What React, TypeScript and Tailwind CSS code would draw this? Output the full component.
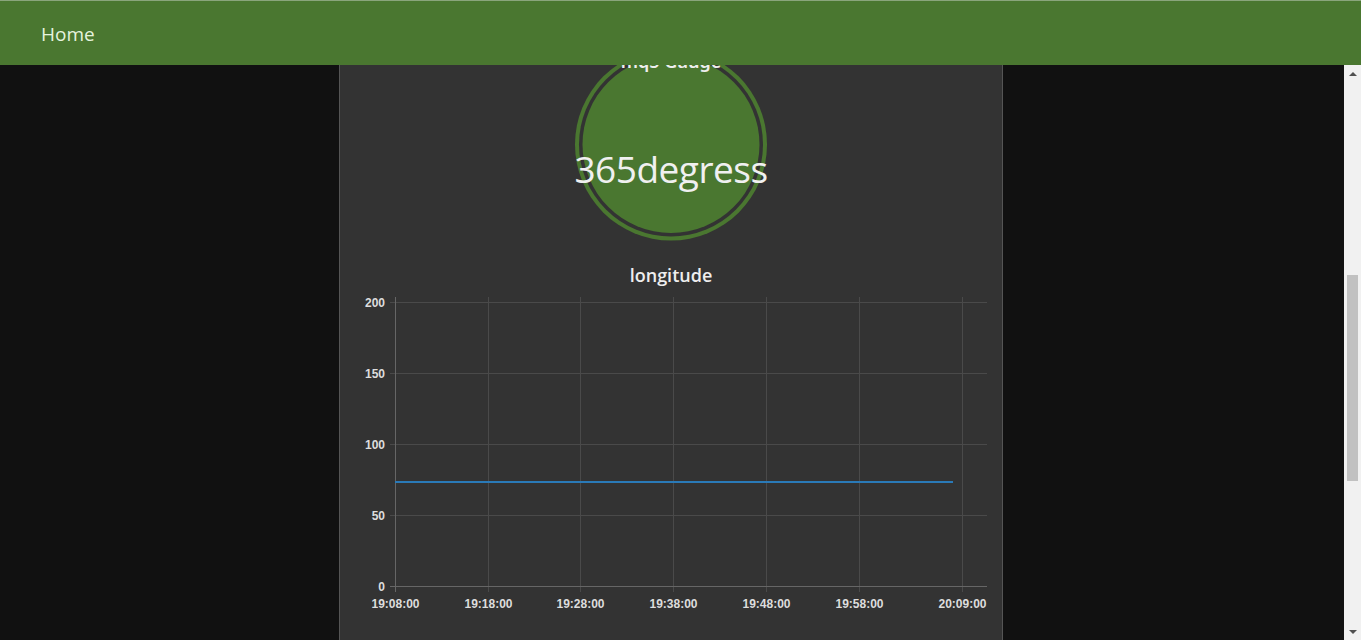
import React from "react";

const yTicks = [
  { v: "200", y: 12 },
  { v: "150", y: 83 },
  { v: "100", y: 154 },
  { v: "50", y: 225 },
  { v: "0", y: 296 },
];
const xTicks = [
  { t: "19:08:00", x: 55.5 },
  { t: "19:18:00", x: 148.5 },
  { t: "19:28:00", x: 240.5 },
  { t: "19:38:00", x: 333.5 },
  { t: "19:48:00", x: 426.5 },
  { t: "19:58:00", x: 519.5 },
  { t: "20:09:00", x: 622.5 },
];

function Chart() {
  return (
    <svg width="662" height="340" viewBox="0 0 662 340" className="block">
      {yTicks.map((t) => (
        <line key={t.v} x1="50" x2="647" y1={t.y + 0.5} y2={t.y + 0.5} stroke="#4a4a4a" strokeWidth="1" />
      ))}
      {xTicks.map((t) => (
        <line key={t.t} x1={t.x} x2={t.x} y1="7" y2="302" stroke="#4a4a4a" strokeWidth="1" />
      ))}
      <line x1="55.5" x2="55.5" y1="7" y2="302" stroke="#666" strokeWidth="1" />
      <line x1="50" x2="647" y1="296.5" y2="296.5" stroke="#666" strokeWidth="1" />
      <line x1="55" x2="613" y1="192" y2="192" stroke="#2a7ab8" strokeWidth="2" />
      {yTicks.map((t) => (
        <text
          key={"l" + t.v}
          x="45"
          y={t.y + 4.5}
          textAnchor="end"
          fontFamily="'Liberation Sans', Arial, sans-serif"
          fontWeight="bold"
          fontSize="12"
          fill="#dddddd"
        >
          {t.v}
        </text>
      ))}
      {xTicks.map((t) => (
        <text
          key={"x" + t.t}
          x={t.x}
          y="318"
          textAnchor="middle"
          fontFamily="'Liberation Sans', Arial, sans-serif"
          fontWeight="bold"
          fontSize="12"
          fill="#dddddd"
        >
          {t.t}
        </text>
      ))}
    </svg>
  );
}

export default function App() {
  return (
    <div className="relative h-[640px] w-[1361px] overflow-hidden bg-[#111111]" style={{ fontFamily: "'Noto Sans', 'Open Sans', sans-serif" }}>
      <header className="absolute left-0 right-0 top-0 z-10 flex h-[65px] items-center border-t border-[#8aa57c] bg-[#4a7730] pl-[41px] pt-[3px]">
        <span className="text-[19px] leading-none text-[#e6f3de]" style={{ fontFamily: "'Open Sans', 'Noto Sans', sans-serif" }}>Home</span>
      </header>

      <div className="flex h-full">
        <div className="flex-1">
          <div className="ml-[339px] h-[637px] w-[664px] border-x border-[#555] bg-[#333333]">
            <div className="relative mt-[48px] h-[193px]">
              <svg width="662" height="193" viewBox="0 0 662 193" className="block">
                <circle cx="331" cy="96.5" r="96" fill="#4a7730" />
                <circle cx="331" cy="96.5" r="92" fill="#333333" />
                <circle cx="331" cy="96.5" r="88.5" fill="#4a7730" />
              </svg>
              <div className="absolute left-0 right-0 top-[2px] text-center text-[18px] font-semibold leading-[22px] text-[#eeeeee]">mq5 Gauge</div>
              <div className="absolute left-0 right-0 top-[99px] text-center text-[37px] leading-[44px] tracking-[-0.5px] text-[#f0f0f0]" style={{ fontFamily: "'Open Sans', 'Noto Sans', sans-serif" }}>
                365degress
              </div>
            </div>
            <div className="mt-[23px] text-center text-[18px] font-semibold leading-[22px] text-[#eeeeee]" style={{ fontFamily: "'Open Sans', 'Noto Sans', sans-serif" }}>longitude</div>
            <div className="mt-[4px]">
              <Chart />
            </div>
          </div>
          <div className="flex h-[3px]">
            <div className="ml-[43px] w-[294px] bg-[#3a3a3a]" />
            <div className="ml-[49px] w-[297px] bg-[#14150f]" />
            <div className="w-[47px] bg-[#3c3d36]" />
          </div>
        </div>
        <div className="mt-[65px] flex w-[17px] flex-col items-center bg-[#f1f1f1]">
          <div className="flex h-[17px] w-full items-center justify-center">
            <div className="h-0 w-0 border-x-[4px] border-b-[4px] border-x-transparent border-b-[#505050]" />
          </div>
          <div className="mt-[193px] h-[206px] w-[11px] bg-[#c1c1c1]" />
          <div className="flex-1" />
          <div className="flex h-[17px] w-full items-center justify-center">
            <div className="h-0 w-0 border-x-[4px] border-t-[4px] border-x-transparent border-t-[#505050]" />
          </div>
        </div>
      </div>
    </div>
  );
}
